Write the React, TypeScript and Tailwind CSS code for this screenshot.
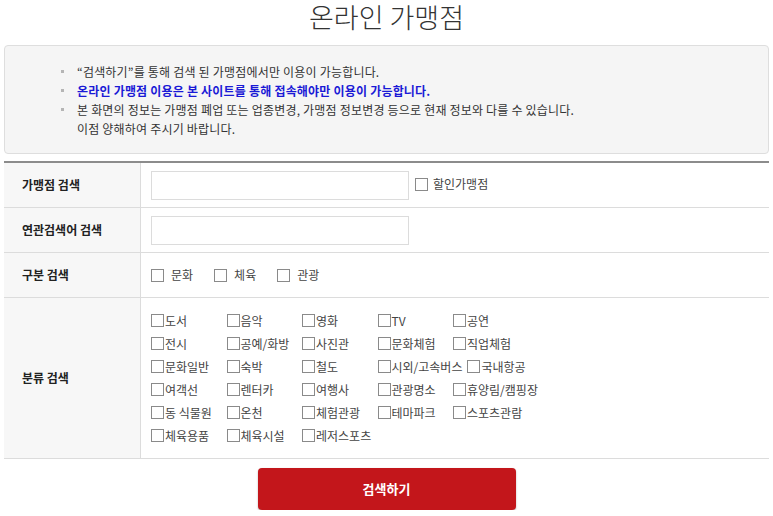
import React from "react";

const font = { fontFamily: '"Noto Sans CJK KR", "Noto Sans", sans-serif' };

const categoryRows = [
  ["도서", "음악", "영화", "TV", "공연"],
  ["전시", "공예/화방", "사진관", "문화체험", "직업체험"],
  ["문화일반", "숙박", "철도", "시외/고속버스", "국내항공"],
  ["여객선", "렌터카", "여행사", "관광명소", "휴양림/캠핑장"],
  ["동 식물원", "온천", "체험관광", "테마파크", "스포츠관람"],
  ["체육용품", "체육시설", "레저스포츠"],
];

function Box() {
  return <span className="inline-block h-[13px] w-[13px] shrink-0 border border-[#8a8a8a] bg-white" />;
}

function Row({ label, children, tall }: { label: string; children: React.ReactNode; tall?: boolean }) {
  return (
    <div className={`flex border-b border-[#dcdcdc] ${tall ? "h-[161px]" : "h-[45px]"}`}>
      <div className="flex w-[137px] shrink-0 items-center border-r border-[#dcdcdc] bg-[#f7f7f7] pl-[18px] text-[12px] font-bold text-[#222]">
        {label}
      </div>
      <div className="flex flex-1 items-center pl-[10px] text-[12px] text-[#444]">{children}</div>
    </div>
  );
}

function Bullet() {
  return <span className="mt-[8px] h-[3px] w-[3px] shrink-0 bg-[#b5b5b5]" />;
}

export default function App() {
  return (
    <div className="w-[773px] bg-white px-[4px] text-[#333]" style={font}>
      <h1 className="h-[45px] pt-[1px] text-center text-[27px] font-light leading-[32px] text-[#333]">
        온라인 가맹점
      </h1>

      <div className="rounded-[4px] border border-[#dedede] bg-[#f5f5f5] pb-[15px] pl-[56px] pt-[16px] text-[12px] leading-[19px] tracking-[0.2px]">
        <ul>
          <li className="flex items-start gap-[13px]">
            <Bullet />
            <span>“검색하기”를 통해 검색 된 가맹점에서만 이용이 가능합니다.</span>
          </li>
          <li className="flex items-start gap-[13px]">
            <Bullet />
            <span className="font-bold text-[#1a1ad6]">온라인 가맹점 이용은 본 사이트를 통해 접속해야만 이용이 가능합니다.</span>
          </li>
          <li className="flex items-start gap-[13px]">
            <Bullet />
            <span>
              본 화면의 정보는 가맹점 폐업 또는 업종변경, 가맹점 정보변경 등으로 현재 정보와 다를 수 있습니다.
              <br />
              이점 양해하여 주시기 바랍니다.
            </span>
          </li>
        </ul>
      </div>

      <div className="mt-[7px] border-t-2 border-[#8c8c8c]">
        <Row label="가맹점 검색">
          <input className="h-[29px] w-[258px] border border-[#dcdcdc] bg-white outline-none" />
          <label className="ml-[6px] flex items-center gap-[5px] pb-[2px]">
            <Box />
            <span>할인가맹점</span>
          </label>
        </Row>
        <Row label="연관검색어 검색">
          <input className="h-[29px] w-[258px] border border-[#dcdcdc] bg-white outline-none" />
        </Row>
        <Row label="구분 검색">
          <div className="flex items-center gap-[21px]">
            {["문화", "체육", "관광"].map((t) => (
              <label key={t} className="flex items-center gap-[7px]">
                <Box />
                <span>{t}</span>
              </label>
            ))}
          </div>
        </Row>
        <Row label="분류 검색" tall>
          <div className="flex flex-col gap-y-[4px]">
            {categoryRows.map((row, i) => (
              <div key={i} className="flex">
                {row.map((c) => (
                  <label key={c} className="flex h-[19px] min-w-[75.5px] items-center gap-[1px] whitespace-nowrap pr-[5px]">
                    <Box />
                    <span>{c}</span>
                  </label>
                ))}
              </div>
            ))}
          </div>
        </Row>
      </div>

      <div className="flex justify-center pt-[9px]">
        <button className="h-[42px] w-[258px] rounded-[4px] bg-[#c3161b] text-[13px] font-bold text-white shadow-[0_1px_2px_rgba(0,0,0,0.3)]">
          검색하기
        </button>
      </div>
    </div>
  );
}
